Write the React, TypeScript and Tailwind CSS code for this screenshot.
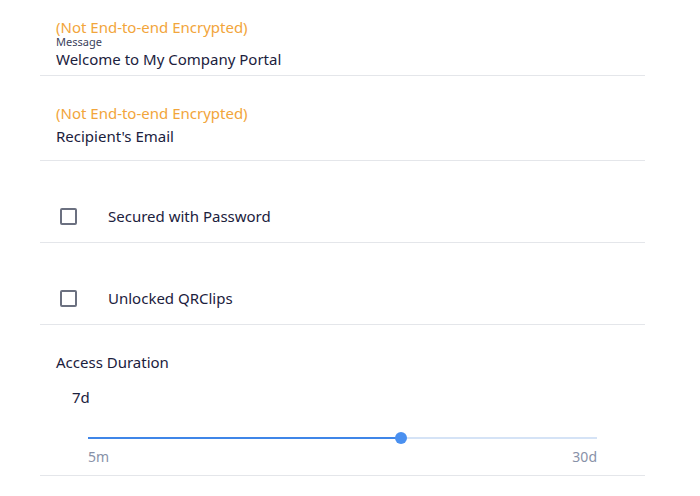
import React from "react";

function Checkbox() {
  return <div className="w-[17px] h-[17px] rounded-[2px] border-2 border-[#6b7080] bg-white shrink-0" />;
}

export default function App() {
  const pct = 61.5;
  return (
    <div className="w-[700px] h-[496px] bg-white text-[#1b213d]" style={{ fontFamily: '"Noto Sans", "Open Sans", sans-serif' }}>
      <div className="ml-[40px] w-[605px]">
        <div className="pl-4 pt-[18px] pb-[6px] border-b border-[#e4e6ea]">
          <div className="text-[15px] leading-[18px] text-[#f2a53b]">(Not End-to-end Encrypted)</div>
          <div className="text-[11px] leading-[12px] text-[#3b3f5c]">Message</div>
          <div className="mt-[1px] text-[15px] leading-[20px]">Welcome to My Company Portal</div>
        </div>
        <div className="pl-4 pt-[28px] pb-[14px] border-b border-[#e4e6ea]">
          <div className="text-[15px] leading-[18px] text-[#f2a53b]">(Not End-to-end Encrypted)</div>
          <div className="mt-[4px] text-[15px] leading-[20px]">Recipient's Email</div>
        </div>
        <div className="pl-5 pt-[45px] pb-[16px] border-b border-[#e4e6ea]">
          <div className="flex items-center h-[20px] gap-[31px]">
            <Checkbox />
            <span className="text-[15px] leading-[20px]">Secured with Password</span>
          </div>
        </div>
        <div className="pl-5 pt-[45px] pb-[16px] border-b border-[#e4e6ea]">
          <div className="flex items-center h-[20px] gap-[31px]">
            <Checkbox />
            <span className="text-[15px] leading-[20px]">Unlocked QRClips</span>
          </div>
        </div>
        <div className="pl-4 pt-[27px] pb-[10px] border-b border-[#e4e6ea]">
          <div className="text-[15px] leading-[20px]">Access Duration</div>
          <div className="mt-[15px] pl-4 text-[15px] leading-[20px]">7d</div>
          <div className="ml-8 w-[509px]">
            <div className="relative mt-[25px] h-[12px] flex items-center">
              <div className="w-full h-[2px] bg-[#d5e3f6]" />
              <div className="absolute left-0 top-[5px] h-[2px] bg-[#3f86e8]" style={{ width: `${pct}%` }} />
              <div className="absolute top-0 w-[12px] h-[12px] rounded-full bg-[#4a90f0] -ml-[6px]" style={{ left: `${pct}%` }} />
            </div>
            <div className="mt-[5px] flex justify-between text-[14px] leading-[16px] text-[#8891a8]">
              <span>5m</span>
              <span>30d</span>
            </div>
          </div>
        </div>
      </div>
    </div>
  );
}
